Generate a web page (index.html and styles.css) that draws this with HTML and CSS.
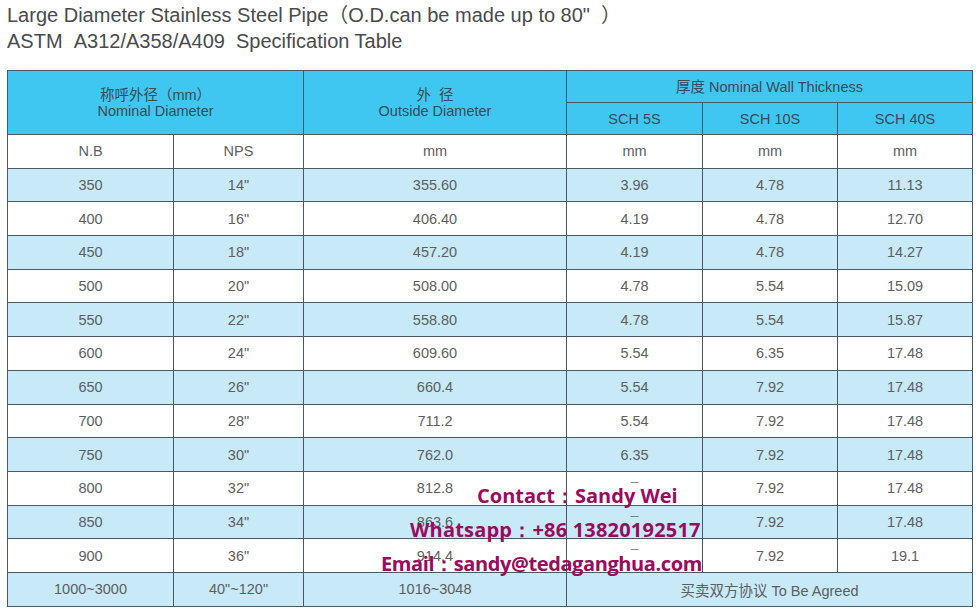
FILE: index.html
```html
<!DOCTYPE html>
<html lang="en">
<head>
<meta charset="utf-8">
<title>Large Diameter Stainless Steel Pipe</title>
<link rel="stylesheet" href="styles.css">
</head>
<body>
<div class="page">
  <div class="title">
    <p>Large Diameter Stainless Steel Pipe（O.D.can be made up to 80"&nbsp;&nbsp;）</p>
    <p>ASTM&nbsp;&nbsp;A312/A358/A409&nbsp;&nbsp;Specification Table</p>
  </div>
  <div class="wrap">
    <table class="spec">
      <colgroup>
        <col class="c1"><col class="c2"><col class="c3"><col class="c4"><col class="c5"><col class="c6">
      </colgroup>
      <thead>
        <tr class="h1">
          <th colspan="2" rowspan="2">称呼外径（mm）<br>Nominal Diameter</th>
          <th rowspan="2">外&nbsp;&nbsp;径<br>Outside Diameter</th>
          <th colspan="3">厚度 Nominal Wall Thickness</th>
        </tr>
        <tr class="h2">
          <th>SCH 5S</th><th>SCH 10S</th><th>SCH 40S</th>
        </tr>
      </thead>
      <tbody>
        <tr class="w"><td>N.B</td><td>NPS</td><td>mm</td><td>mm</td><td>mm</td><td>mm</td></tr>
        <tr class="b"><td>350</td><td>14"</td><td>355.60</td><td>3.96</td><td>4.78</td><td>11.13</td></tr>
        <tr class="w"><td>400</td><td>16"</td><td>406.40</td><td>4.19</td><td>4.78</td><td>12.70</td></tr>
        <tr class="b"><td>450</td><td>18"</td><td>457.20</td><td>4.19</td><td>4.78</td><td>14.27</td></tr>
        <tr class="w"><td>500</td><td>20"</td><td>508.00</td><td>4.78</td><td>5.54</td><td>15.09</td></tr>
        <tr class="b"><td>550</td><td>22"</td><td>558.80</td><td>4.78</td><td>5.54</td><td>15.87</td></tr>
        <tr class="w"><td>600</td><td>24"</td><td>609.60</td><td>5.54</td><td>6.35</td><td>17.48</td></tr>
        <tr class="b"><td>650</td><td>26"</td><td>660.4</td><td>5.54</td><td>7.92</td><td>17.48</td></tr>
        <tr class="w"><td>700</td><td>28"</td><td>711.2</td><td>5.54</td><td>7.92</td><td>17.48</td></tr>
        <tr class="b"><td>750</td><td>30"</td><td>762.0</td><td>6.35</td><td>7.92</td><td>17.48</td></tr>
        <tr class="w"><td>800</td><td>32"</td><td class="hi">812.8</td><td class="dash">¯</td><td>7.92</td><td>17.48</td></tr>
        <tr class="b"><td>850</td><td>34"</td><td class="hi">863.6</td><td class="dash">¯</td><td>7.92</td><td>17.48</td></tr>
        <tr class="w"><td>900</td><td>36"</td><td class="hi">914.4</td><td class="dash">¯</td><td>7.92</td><td>19.1</td></tr>
        <tr class="b"><td>1000~3000</td><td>40"~120"</td><td>1016~3048</td><td colspan="3">买卖双方协议 To Be Agreed</td></tr>
      </tbody>
    </table>
    <div class="stamp">
      <div class="l1">Contact：Sandy Wei</div>
      <div class="l2">Whatsapp：+86 13820192517</div>
      <div class="l3">Email：sandy@tedaganghua.com</div>
    </div>
  </div>
</div>
</body>
</html>
```

FILE: styles.css
```css
html, body {
  margin: 0;
  padding: 0;
  background: #ffffff;
}
.page {
  padding: 2px 6px 0 7px;
  font-family: "Liberation Sans", Arial, "Noto Sans CJK SC", sans-serif;
}
.title p {
  margin: 0;
  font-size: 20px;
  line-height: 26px;
  color: #4a4a4a;
}
.title {
  margin-bottom: 16px;
}
.wrap {
  position: relative;
  width: 965px;
}
.spec {
  border-collapse: collapse;
  width: 965px;
  table-layout: fixed;
  font-family: "Liberation Sans", Arial, "Noto Sans CJK SC", sans-serif;
  font-size: 14.5px;
  color: #5e5e5e;
}
.c1 { width: 166px; }
.c2 { width: 130px; }
.c3 { width: 263px; }
.c4 { width: 136px; }
.c5 { width: 135px; }
.c6 { width: 135px; }
.spec th, .spec td {
  border: 1px solid #4a5863;
  text-align: center;
  padding: 0;
  font-weight: normal;
}
.spec th {
  background: #40c7f1;
  color: #3b4a55;
  line-height: 16px;
}
.h1 th { height: 31px; }
.h2 th { height: 31px; }
.spec td { height: 32.7px; }
.b td { background: #c7e9f8; }
.w td { background: #ffffff; }
.hi { vertical-align: middle; }
.spec td.dash {
  vertical-align: top;
  padding-top: 7px;
  line-height: 18px;
  height: 25.7px;
  color: #333;
}
.stamp {
  position: absolute;
  left: 0;
  top: 409px;
  font-family: "Open Sans", "Noto Sans", sans-serif;
  font-weight: 700;
  font-size: 20px;
  line-height: 34px;
  color: #9a0b5c;
  white-space: nowrap;
}
.l1 { padding-left: 470px; }
.l2 { padding-left: 403px; letter-spacing: 0.2px; }
.l3 { padding-left: 374px; letter-spacing: -0.4px; }
```
